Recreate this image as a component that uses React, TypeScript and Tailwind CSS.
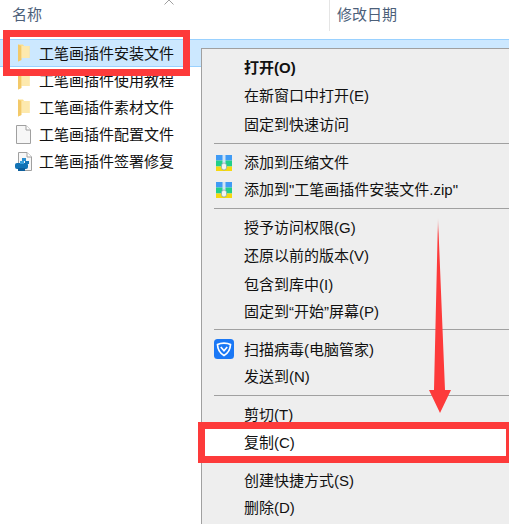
import React from "react";

const ZipIcon = () => (
  <svg width="16" height="16" viewBox="0 0 16 16" className="block">
    <rect x="0" y="0" width="16" height="5.5" fill="#3f9bf5" />
    <rect x="0" y="5.5" width="16" height="6" fill="#22cf8a" />
    <rect x="0" y="11.5" width="16" height="4.5" fill="#f6d80e" />
    <rect x="6.5" y="0" width="3" height="9" fill="#cfe4f5" />
    <rect x="5.5" y="8" width="5" height="7" rx="2.5" fill="#f4f4f4" stroke="#7da4a8" strokeWidth="0.7" />
  </svg>
);

const ShieldIcon = () => (
  <svg width="20" height="20" viewBox="0 0 20 20" className="block">
    <rect width="20" height="20" rx="3.5" fill="#1b78f5" />
    <path d="M3.5 5.5 C7 3.6 13 3.6 16.5 5.5 C16.3 10.5 13.5 14.5 10 16.5 C6.5 14.5 3.7 10.5 3.5 5.5 Z" fill="none" stroke="#fff" strokeWidth="1.7" />
    <path d="M6.8 8 L10 11.8 L13.2 8" fill="none" stroke="#fff" strokeWidth="1.7" />
  </svg>
);

const FolderIcon = () => (
  <svg width="13" height="18" viewBox="0 0 13 18" className="block">
    <path d="M1 0.5 H6 L7 2 H12.5 V14 H4 V16 L1 17.5 Z" fill="#fbdf8e" />
    <path d="M1 0.5 L4.5 2 V16 L1 17.5 Z" fill="#f3c969" />
    <path d="M4.5 2 H12.5 V14 H4.5 Z" fill="#fde9ae" />
  </svg>
);

const FileIcon = () => (
  <svg width="15" height="19" viewBox="0 0 15 19" className="block">
    <path d="M0.5 0.5 H10 L14.5 5 V18.5 H0.5 Z" fill="#f7f7f7" stroke="#a0a0a0" />
    <path d="M10 0.5 V5 H14.5" fill="#fff" stroke="#a0a0a0" />
  </svg>
);

const ScriptIcon = () => (
  <svg width="18" height="19" viewBox="0 0 18 19" className="block">
    <path d="M3.5 0.5 H12 L16.5 5 V18.5 H3.5 Z" fill="#f7f7f7" stroke="#a0a0a0" />
    <path d="M12 0.5 V5 H16.5" fill="#fff" stroke="#a0a0a0" />
    <rect x="7" y="6" width="4" height="3" fill="#2b8fd0" />
    <rect x="10" y="9" width="4" height="3" fill="#1a78b8" />
    <rect x="0" y="11" width="13" height="6" rx="2" fill="#1273b5" />
    <rect x="3" y="16" width="7" height="3" fill="#0d5f9c" />
    <rect x="5" y="9" width="4" height="3" fill="#3aa0dc" />
  </svg>
);

const files = [
  { name: "工笔画插件安装文件", icon: <FolderIcon />, selected: true },
  { name: "工笔画插件使用教程", icon: <FolderIcon /> },
  { name: "工笔画插件素材文件", icon: <FolderIcon /> },
  { name: "工笔画插件配置文件", icon: <FileIcon /> },
  { name: "工笔画插件签署修复", icon: <ScriptIcon /> },
];

type MenuRow =
  | { sep: true; h: string }
  | { label: string; bold?: boolean; icon?: React.ReactNode; h: string; copy?: boolean };

const menu: MenuRow[] = [
  { label: "打开(O)", bold: true, h: "h-[28px]" },
  { label: "在新窗口中打开(E)", h: "h-[29px]" },
  { label: "固定到快速访问", h: "h-[28px]" },
  { sep: true, h: "h-[11px]" },
  { label: "添加到压缩文件", icon: <ZipIcon />, h: "h-[27px]" },
  { label: '添加到"工笔画插件安装文件.zip"', icon: <ZipIcon />, h: "h-[27px]" },
  { sep: true, h: "h-[11px]" },
  { label: "授予访问权限(G)", h: "h-[27px]" },
  { label: "还原以前的版本(V)", h: "h-[29px]" },
  { label: "包含到库中(I)", h: "h-[28px]" },
  { label: "固定到“开始”屏幕(P)", h: "h-[26px]" },
  { sep: true, h: "h-[11px]" },
  { label: "扫描病毒(电脑管家)", icon: <ShieldIcon />, h: "h-[28px]" },
  { label: "发送到(N)", h: "h-[27px]" },
  { sep: true, h: "h-[11px]" },
  { label: "剪切(T)", h: "h-[27px]" },
  { label: "复制(C)", h: "h-[29px]", copy: true },
  { sep: true, h: "h-[10px]" },
  { label: "创建快捷方式(S)", h: "h-[27px]" },
  { label: "删除(D)", h: "h-[27px]" },
];

export default function App() {
  return (
    <div className="relative w-[509px] h-[524px] overflow-hidden bg-white font-['Liberation_Sans','Noto_Sans_CJK_SC',sans-serif]">
      {/* Column header */}
      <div className="relative flex h-[39px] items-start text-[15px] leading-[20px] text-[#4c607a]">
        <div className="w-[330px] h-[31px] pl-3 pt-[5px] border-r border-[#e5e5e5]">名称</div>
        <div className="pl-[7px] pt-[5px]">修改日期</div>
        <svg width="10" height="5" viewBox="0 0 10 5" className="absolute left-[164px] top-0">
          <path d="M0.5 4.5 L5 0 L9.5 4.5" fill="none" stroke="#a0a0a0" />
        </svg>
      </div>

      {/* File list */}
      <div className="flex flex-col">
        {files.map((f) => (
          <div
            key={f.name}
            className={`flex items-center pl-[12px] text-[15px] text-[#111] ${
              f.selected ? "bg-[#cce8ff] border-y border-[#99d1ff] h-[28px]" : "h-[27px]"
            }`}
          >
            <div className="w-[27px] flex justify-center pr-[4px]">{f.icon}</div>
            <span className="pt-[2px]">{f.name}</span>
          </div>
        ))}
      </div>

      {/* Context menu */}
      <div className="absolute left-[201px] top-[48px] w-[308px] h-[476px] bg-[#eeeeee] border-l border-t border-[#a0a0a0] pt-[4px] text-[15px] text-[#111]">
        {menu.map((m, i) =>
          "sep" in m ? (
            <div key={i} className={`${m.h} flex items-center pl-[12px]`}>
              <div className="w-full h-px bg-[#a0a0a0]" />
            </div>
          ) : (
            <div key={i} className={`${m.h} flex items-center ${m.copy ? "bg-white" : ""}`}>
              <div className="w-[42px] flex justify-center pl-[2px] shrink-0">{m.icon}</div>
              <span className={m.bold ? "font-bold pt-[2px]" : "pt-[2px]"}>{m.label}</span>
            </div>
          )
        )}
      </div>

      {/* Annotations */}
      <div className="absolute left-[3px] top-[30px] w-[187px] h-[46px] border-[7px] border-[#fd3a3a]" />
      <div className="absolute left-[198px] top-[422px] w-[315px] h-[41px] border-[7px] border-[#fd3a3a]" />
      <svg width="30" height="200" viewBox="0 0 30 200" className="absolute left-[425px] top-[216px]">
        <defs>
          <linearGradient id="arrowFade" x1="0" y1="0" x2="0" y2="1">
            <stop offset="0" stopColor="#fd3a3a" stopOpacity="0.3" />
            <stop offset="0.08" stopColor="#fd3a3a" />
          </linearGradient>
        </defs>
        <path d="M13 2 L20 174 H26 L15 197 L4 174 H9 Z" fill="url(#arrowFade)" />
      </svg>
    </div>
  );
}
